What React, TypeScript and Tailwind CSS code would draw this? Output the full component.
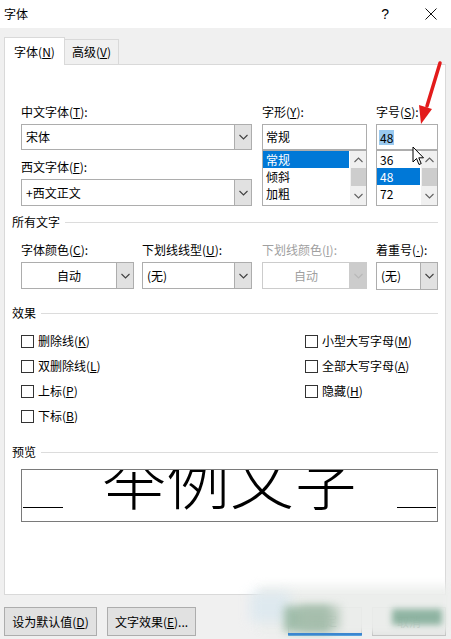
import React from "react"

const font = "font-['Microsoft_YaHei','Noto_Sans_CJK_SC',sans-serif]"

function Chevron({ up = false, color = "#404040" }: { up?: boolean; color?: string }) {
  return (
    <svg width="9" height="6" viewBox="0 0 9 6">
      <polyline
        points={up ? "0.5,5 4.5,1 8.5,5" : "0.5,1 4.5,5 8.5,1"}
        fill="none"
        stroke={color}
        strokeWidth="1.1"
      />
    </svg>
  )
}

function Combo({
  w,
  h = "h-[27px]",
  text,
  center = false,
  disabled = false,
}: {
  w: string
  h?: string
  text: string
  center?: boolean
  disabled?: boolean
}) {
  return (
    <div
      className={`${w} ${h} flex border ${disabled ? "border-[#cccccc]" : "border-[#adadad]"} bg-white`}
    >
      <div
        className={`flex-1 flex items-center text-[12px] ${center ? "justify-center" : "pl-[4px]"} ${disabled ? "text-[#a0a0a0]" : "text-black"}`}
      >
        {text}
      </div>
      <div
        className={`w-[17px] flex items-center justify-center border-l ${disabled ? "bg-[#cccccc] border-[#cccccc]" : "bg-[#e1e1e1] border-[#adadad]"}`}
      >
        <Chevron color={disabled ? "#b8b8b8" : "#404040"} />
      </div>
    </div>
  )
}

function ListBox({ w, items, selected }: { w: string; items: string[]; selected: number }) {
  return (
    <div className={`${w} h-[56px] border border-[#adadad] bg-white flex`}>
      <div className="flex-1 flex flex-col">
        {items.map((it, i) => (
          <div
            key={it}
            className={`h-[17px] flex items-center pl-[3px] text-[12px] ${i === selected ? "bg-[#0078d7] text-white" : "text-black"}`}
          >
            {it}
          </div>
        ))}
      </div>
      <div className="w-[16px] ml-[1px] bg-[#f0f0f0] flex flex-col items-center">
        <div className="h-[17px] flex items-center justify-center">
          <Chevron up color="#606060" />
        </div>
        <div className="h-[18px] w-[15px] bg-[#cdcdcd]" />
        <div className="flex-1 flex items-center justify-center">
          <Chevron color="#606060" />
        </div>
      </div>
    </div>
  )
}

function Label({ children, disabled = false }: { children: React.ReactNode; disabled?: boolean }) {
  return (
    <div className={`h-[16px] leading-[16px] text-[12px] ${disabled ? "text-[#a0a0a0]" : "text-black"}`}>
      {children}
    </div>
  )
}

function Heading({ text }: { text: string }) {
  return (
    <div className="h-[16px] flex items-center">
      <span className="text-[12px] leading-[16px] text-black">{text}</span>
      <div className="flex-1 h-px bg-[#dcdcdc] ml-[5px]" />
    </div>
  )
}

function Check({ children }: { children: React.ReactNode }) {
  return (
    <div className="h-[16px] flex items-center">
      <div className="w-[13px] h-[13px] border border-[#333333] bg-white" />
      <span className="ml-[4px] text-[12px] leading-[16px] text-black">{children}</span>
    </div>
  )
}

export default function App() {
  return (
    <div className={`${font} relative w-[451px] h-[639px] bg-[#f0f0f0] overflow-hidden`}>
      {/* title bar */}
      <div className="h-[28px] bg-white flex items-center pl-[4px]">
        <span className="text-[12px] text-black">字体</span>
        <span className="ml-auto text-[14px] text-black mr-[36px] font-['Liberation_Sans',sans-serif]">?</span>
        <svg width="12" height="12" viewBox="0 0 12 12" className="mr-[14px]">
          <path d="M0.5 0.5 L11.5 11.5 M11.5 0.5 L0.5 11.5" stroke="#111" strokeWidth="1" />
        </svg>
      </div>

      {/* tabs */}
      <div className="pt-[9px] pl-[4px] flex items-end -mb-px relative z-10">
        <div className="w-[61px] h-[28px] bg-white border border-b-0 border-[#d9d9d9] flex items-center justify-center text-[12px] text-black">
          字体(<u>N</u>)
        </div>
        <div className="w-[54px] h-[25px] mb-px bg-[#f0f0f0] border border-l-0 border-b-0 border-[#d9d9d9] flex items-center justify-center text-[12px] text-black">
          高级(<u>V</u>)
        </div>
      </div>

      {/* panel */}
      <div className="ml-[4px] w-[442px] h-[531px] bg-white border border-[#d9d9d9] pl-[7px] pr-[7px] flex flex-col">
        <div className="mt-[39px] ml-[9px] flex">
          <div className="w-[231px] flex flex-col">
            <Label>中文字体(<u>T</u>):</Label>
            <div className="mt-[4px]">
              <Combo w="w-[231px]" h="h-[26px]" text="宋体" />
            </div>
            <div className="mt-[9px]">
              <Label>西文字体(<u>F</u>):</Label>
            </div>
            <div className="mt-[4px]">
              <Combo w="w-[231px]" text="+西文正文" />
            </div>
          </div>
          <div className="ml-[10px] w-[105px] flex flex-col">
            <Label>字形(<u>Y</u>):</Label>
            <div className="mt-[4px] h-[26px] border border-[#adadad] bg-white flex items-center pl-[3px] text-[12px] text-black">
              常规
            </div>
            <ListBox w="w-[105px]" items={["常规", "倾斜", "加粗"]} selected={0} />
          </div>
          <div className="ml-[9px] w-[62px] flex flex-col">
            <Label>字号(<u>S</u>):</Label>
            <div className="mt-[4px] h-[26px] border border-[#adadad] bg-white flex items-center pl-[2px] text-[12px] text-black">
              <span className="bg-[#99c9ef] px-px leading-[15px]">48</span>
            </div>
            <ListBox w="w-[62px]" items={["36", "48", "72"]} selected={1} />
          </div>
        </div>

        <div className="mt-[8px]">
          <Heading text="所有文字" />
        </div>

        <div className="mt-[12px] ml-[9px] flex">
          <div className="w-[113px]">
            <Label>字体颜色(<u>C</u>):</Label>
            <div className="mt-[4px]">
              <Combo w="w-[113px]" text="自动" center />
            </div>
          </div>
          <div className="ml-[8px] w-[110px]">
            <Label>下划线线型(<u>U</u>):</Label>
            <div className="mt-[4px]">
              <Combo w="w-[110px]" text="(无)" />
            </div>
          </div>
          <div className="ml-[10px] w-[105px]">
            <Label disabled>下划线颜色(<u>I</u>):</Label>
            <div className="mt-[4px]">
              <Combo w="w-[105px]" text="自动" center disabled />
            </div>
          </div>
          <div className="ml-[9px] w-[62px]">
            <Label>
              着重号(<u className="font-['Liberation_Sans',sans-serif]">·</u>):
            </Label>
            <div className="mt-[4px]">
              <Combo w="w-[62px]" h="h-[28px]" text="(无)" />
            </div>
          </div>
        </div>

        <div className="mt-[15px]">
          <Heading text="效果" />
        </div>

        <div className="mt-[12px] ml-[9px] flex">
          <div className="w-[284px] flex flex-col gap-[9px]">
            <Check>删除线(<u>K</u>)</Check>
            <Check>双删除线(<u>L</u>)</Check>
            <Check>上标(<u>P</u>)</Check>
            <Check>下标(<u>B</u>)</Check>
          </div>
          <div className="flex flex-col gap-[9px]">
            <Check>小型大写字母(<u>M</u>)</Check>
            <Check>全部大写字母(<u>A</u>)</Check>
            <Check>隐藏(<u>H</u>)</Check>
          </div>
        </div>

        <div className="mt-[20px]">
          <Heading text="预览" />
        </div>

        <div className="mt-[9px] ml-[9px] w-[417px] h-[53px] border border-[#7a7a7a] bg-white overflow-hidden flex items-end justify-between px-px">
          <div className="w-[40px] h-px bg-black mb-[13px]" />
          <div className="text-[64px] leading-[64px] text-black font-light mb-[13px] whitespace-nowrap">
            举例文字
          </div>
          <div className="w-[39px] h-px bg-black mb-[13px]" />
        </div>
      </div>

      {/* bottom buttons */}
      <div className="mt-[12px] pl-[4px] pr-[5px] flex">
        <div className="w-[93px] h-[29px] border border-[#adadad] bg-[#e1e1e1] flex items-center justify-center text-[12px] text-black">
          设为默认值(<u>D</u>)
        </div>
        <div className="ml-[10px] w-[89px] h-[29px] border border-[#adadad] bg-[#e1e1e1] flex items-center justify-center text-[12px] text-black">
          文字效果(<u>E</u>)...
        </div>
        <div className="ml-auto w-[74px] h-[29px] border border-[#adadad] border-b-2 border-b-[#0078d7] bg-[#e1e1e1] flex items-center justify-center text-[12px] text-black">
          确定
        </div>
        <div className="ml-[10px] w-[74px] h-[29px] border border-[#adadad] bg-[#e1e1e1] flex items-center justify-center text-[12px] text-black">
          取消
        </div>
      </div>

      {/* smudged area over the dialog buttons */}
      <div className="absolute left-[258px] top-[586px] w-[194px] h-[48px] bg-[#eceeec] blur-[5px] opacity-95" />
      <div className="absolute left-[250px] top-[592px] w-[40px] h-[30px] bg-[#dbe8f0] blur-[6px] opacity-80" />
      <div className="absolute left-[284px] top-[606px] w-[46px] h-[26px] bg-[#8fb29b] blur-[4px] opacity-80" />
      <div className="absolute left-[300px] top-[606px] w-[40px] h-[24px] bg-[#a9bfae] blur-[5px] opacity-70" />
      <div className="absolute left-[392px] top-[609px] w-[50px] h-[16px] bg-[#78a690] blur-[3px] opacity-80" />
      <div className="absolute left-[288px] top-[633px] w-[74px] h-[2px] bg-[#3b86d0]" />

      {/* red arrow */}
      <svg className="absolute left-0 top-0 pointer-events-none" width="451" height="639">
        <line x1="440" y1="63" x2="427" y2="106" stroke="#e31b1b" strokeWidth="3.5" strokeLinecap="round" />
        <polygon points="421,124 432,109 419,105" fill="#e31b1b" />
      </svg>

      {/* mouse cursor */}
      <svg className="absolute left-[412px] top-[146px] pointer-events-none" width="14" height="21" viewBox="0 0 14 21">
        <path
          d="M1 1 L1 16 L4.5 12.5 L7 18.5 L9.2 17.6 L6.8 11.8 L11.5 11.8 Z"
          fill="white"
          stroke="black"
          strokeWidth="1"
          strokeLinejoin="round"
        />
      </svg>
    </div>
  )
}
